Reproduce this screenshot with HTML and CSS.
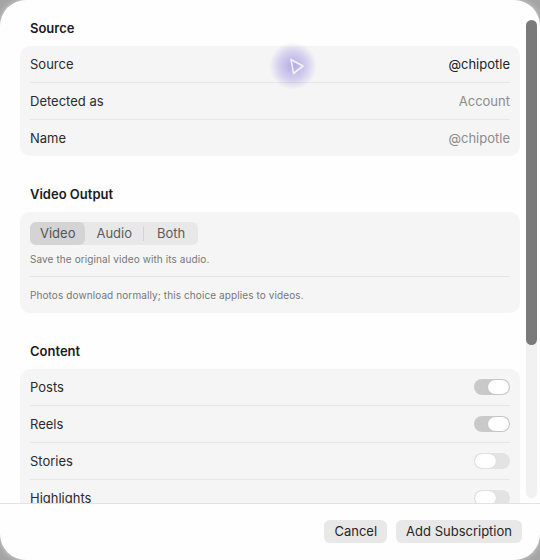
FILE: index.html
```html
<!DOCTYPE html>
<html>
    <head>
        <title>Add Subscription</title>
        <link rel="stylesheet" href="styles.css">
    </head>
    <body>
        <div class="sheet">
            <div class="scroller">
                <div class="form">
                    <div class="section-title">Source</div>
                    <div class="card">
                        <div class="row">
                            <span class="label">Source</span>
                            <span class="value strong">@chipotle</span>
                        </div>
                        <div class="row">
                            <span class="label">Detected as</span>
                            <span class="value">Account</span>
                        </div>
                        <div class="row">
                            <span class="label">Name</span>
                            <span class="value">@chipotle</span>
                        </div>
                    </div>

                    <div class="section-title">Video Output</div>
                    <div class="card padded">
                        <div class="segmented">
                            <div class="segment selected">Video</div>
                            <div class="segment">Audio</div>
                            <div class="segment-sep"></div>
                            <div class="segment">Both</div>
                        </div>
                        <div class="caption first">Save the original video with its audio.</div>
                        <div class="rule"></div>
                        <div class="caption">Photos download normally; this choice applies to videos.</div>
                    </div>

                    <div class="section-title">Content</div>
                    <div class="card">
                        <div class="row">
                            <span class="label">Posts</span>
                            <span class="toggle on"><span class="knob"></span></span>
                        </div>
                        <div class="row">
                            <span class="label">Reels</span>
                            <span class="toggle on"><span class="knob"></span></span>
                        </div>
                        <div class="row">
                            <span class="label">Stories</span>
                            <span class="toggle"><span class="knob"></span></span>
                        </div>
                        <div class="row">
                            <span class="label">Highlights</span>
                            <span class="toggle"><span class="knob"></span></span>
                        </div>
                    </div>
                </div>
                <div class="scrollbar">
                    <div class="thumb"></div>
                </div>
            </div>
            <div class="footer">
                <div class="btn">Cancel</div>
                <div class="btn">Add Subscription</div>
            </div>

            <!-- pointer with its hover glow -->
            <div class="pointer">
                <svg width="48" height="48" viewBox="0 0 48 48">
                    <path d="M22 17.5 L34 24 L24.5 31.5 Z" fill="none" stroke="#f3f1fb" stroke-width="1.6" stroke-linejoin="round"/>
                </svg>
            </div>
        </div>
    </body>
</html>
```

FILE: styles.css
```css
html, body {
    margin: 0;
    height: 100%;
}
body {
    background: #a4a4a4;
    font-family: Inter, "Noto Sans", sans-serif;
    font-size: 13px;
    color: #262626;
}
.sheet {
    position: relative;
    width: 540px;
    height: 560px;
    background: #fefefe;
    border-radius: 26px;
    box-shadow: 0 0 6px rgba(255, 255, 255, 0.5);
    display: flex;
    flex-direction: column;
    overflow: hidden;
}
.scroller {
    height: 503px;
    display: flex;
    overflow: hidden;
}
.form {
    width: 500px;
    margin-left: 20px;
    padding-top: 20px;
}
.section-title {
    font-weight: 600;
    line-height: 16px;
    padding-left: 10px;
    margin-bottom: 10px;
    color: #1c1c1c;
}
.card {
    background: #f5f5f5;
    border-radius: 10px;
    margin-bottom: 30px;
}
.card.padded {
    padding: 10px 10px 11px;
}
.row {
    height: 36px;
    margin: 0 10px;
    display: flex;
    align-items: center;
    justify-content: space-between;
    border-bottom: 1px solid #e7e7e7;
}
.row:last-child {
    border-bottom: none;
}
.label {
    color: #2a2a2a;
}
.value {
    color: #8c8c8c;
}
.value.strong {
    color: #222;
}
.segmented {
    display: inline-flex;
    align-items: center;
    background: #e8e8e8;
    border-radius: 6px;
    height: 23px;
}
.segment {
    height: 23px;
    line-height: 23px;
    padding: 0 11px;
    color: #5c5c5c;
    border-radius: 6px;
}
.segment:last-child {
    padding: 0 13px;
}
.segment.selected {
    background: #d4d4d4;
    color: #555;
    padding: 0 10px;
}
.segment-sep {
    width: 1px;
    height: 14px;
    background: #d3d3d3;
}
.caption {
    font-size: 10px;
    letter-spacing: 0.1px;
    line-height: 14px;
    color: #777;
    margin-top: 11px;
}
.caption.first {
    margin-top: 7px;
}
.rule {
    height: 1px;
    background: #e4e4e4;
    margin-top: 10px;
}
.toggle {
    width: 36px;
    height: 16px;
    border-radius: 8px;
    background: #e3e3e3;
    display: flex;
    align-items: center;
    padding: 0 1px;
    box-sizing: border-box;
}
.toggle.on {
    background: #c9c9c9;
    justify-content: flex-end;
}
.knob {
    width: 21px;
    height: 14px;
    border-radius: 7px;
    background: #fff;
    box-shadow: 0 0 1px rgba(0, 0, 0, 0.15);
}
.scrollbar {
    width: 11px;
    margin-left: 6px;
    margin-top: 20px;
    height: 478px;
    background: #f1f1f1;
    border-radius: 6px;
}
.thumb {
    height: 325px;
    background: #7a7a7a;
    border-radius: 6px;
}
.footer {
    flex: 1;
    border-top: 1px solid #e2e2e2;
    display: flex;
    justify-content: flex-end;
    align-items: flex-start;
    gap: 9px;
    padding: 16px 18px 0 0;
}
.btn {
    height: 23px;
    line-height: 23px;
    padding: 0 10px;
    background: #e8e8e8;
    border-radius: 6px;
    color: #262626;
}
.pointer {
    position: absolute;
    left: 269px;
    top: 42px;
    width: 48px;
    height: 48px;
    border-radius: 50%;
    background: radial-gradient(circle, rgba(125, 110, 215, 0.55) 0%, rgba(140, 125, 220, 0.3) 42%, rgba(160, 150, 230, 0) 70%);
}
```
